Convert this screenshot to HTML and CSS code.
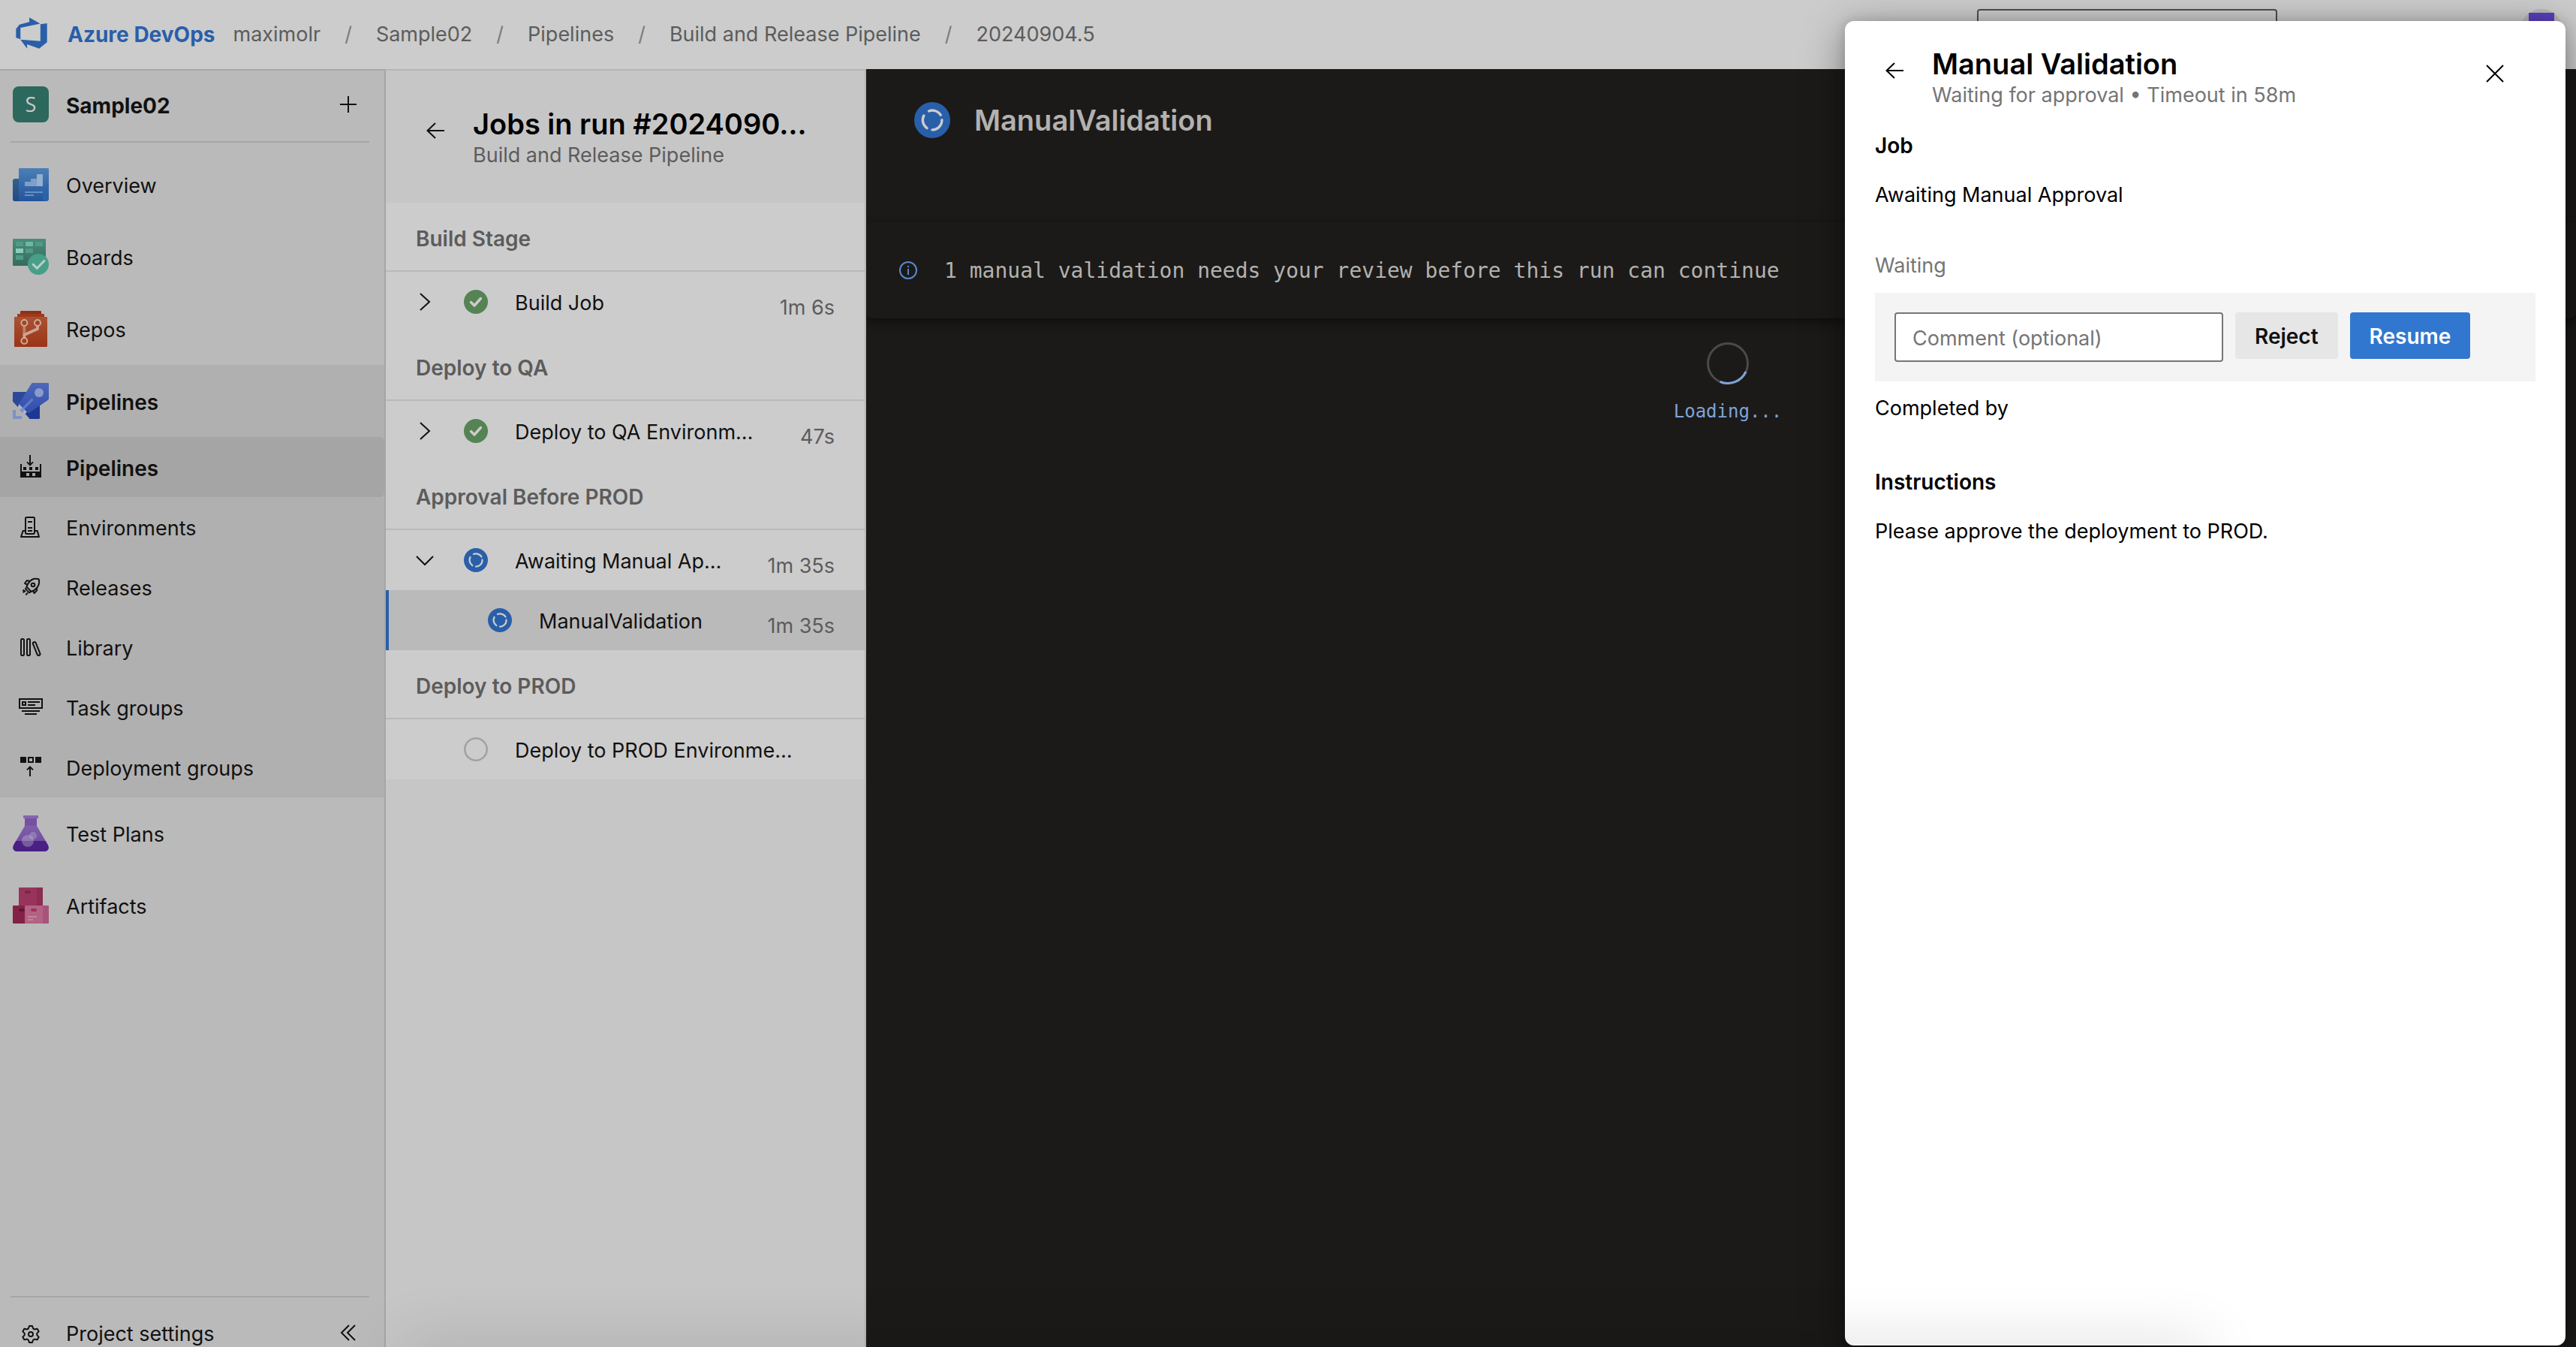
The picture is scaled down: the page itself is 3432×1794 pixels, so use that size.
FILE: index.html
```html
<!DOCTYPE html>
<html lang="en">
<head>
<meta charset="utf-8">
<title>Jobs in run #20240904.5 - Pipelines</title>
<link rel="stylesheet" href="styles.css">
</head>
<body>
<svg class="defs" aria-hidden="true">
  <defs>
    <linearGradient id="g-overview" x2="0" y2="1"><stop stop-color="#4b80b6"/><stop offset="1" stop-color="#24539c"/></linearGradient>
    <linearGradient id="g-overview-back" x2="0" y2="1"><stop stop-color="#335f8f"/><stop offset="1" stop-color="#204a85"/></linearGradient>
    <linearGradient id="g-boards" x2="0" y2="1"><stop stop-color="#4c8c7b"/><stop offset="1" stop-color="#356c5c"/></linearGradient>
    <linearGradient id="g-repos" x2="0" y2="1"><stop stop-color="#a95334"/><stop offset="1" stop-color="#9a3416"/></linearGradient>
    <linearGradient id="g-rocket" x2="0" y2="1"><stop stop-color="#4d68b8"/><stop offset="1" stop-color="#2f4fae"/></linearGradient>
    <linearGradient id="g-flask" x2="0" y2="1"><stop stop-color="#7f60aa"/><stop offset="1" stop-color="#6a42a0"/></linearGradient>
  </defs>
  <symbol id="running" viewBox="0 0 48 48">
    <circle cx="24" cy="24" r="24" fill="#295fa9"/>
    <g fill="none" stroke="#ccc" stroke-width="3.4" stroke-linecap="round">
      <path d="M19.5 12A12.9 12.9 0 0 1 35.2 17.2M36.9 23.6A12.9 12.9 0 0 1 24 36.9M17 34.6A12.9 12.9 0 0 1 12.8 18"/>
    </g>
  </symbol>
  <symbol id="success" viewBox="0 0 32 32">
    <circle cx="16" cy="16" r="16" fill="#558354"/>
    <path d="M9.500 16.500L14 21L22.500 11.500" fill="none" stroke="#ccc" stroke-width="3.400" stroke-linecap="round" stroke-linejoin="round"/>
  </symbol>
  <symbol id="queued" viewBox="0 0 32 32"><circle cx="16" cy="16" r="14.700" fill="none" stroke="#a2a2a2" stroke-width="2.600"/></symbol>
  <symbol id="back" viewBox="0 0 24 24"><path d="M24 12H1.500M12 2L1.500 12L12 22" fill="none" stroke="currentColor" stroke-width="2"/></symbol>
  <symbol id="chevron" viewBox="0 0 24 24"><path d="M6 1L18 12L6 23" fill="none" stroke="currentColor" stroke-width="2"/></symbol>
  <symbol id="chevron-down" viewBox="0 0 24 24"><path d="M1 7L12 18L23 7" fill="none" stroke="currentColor" stroke-width="2"/></symbol>
</svg>

<div class="app">
  <header class="topbar">
    <a class="brand" href="#">
      <svg class="brand-logo" viewBox="62 68 128 128" aria-hidden="true"><path fill="#295fa9" d="M117 69L161 94L81 111V157L63 151V115L77 98L117 87ZM162 96L189 92V169L157 195L108 178V195L81 159L162 165Z"/></svg>
      Azure DevOps
    </a>
    <nav aria-label="Breadcrumb">
      <ol class="crumbs">
        <li><a href="#">maximolr</a></li>
        <li><a href="#">Sample02</a></li>
        <li><a href="#">Pipelines</a></li>
        <li><a href="#">Build and Release Pipeline</a></li>
        <li><a href="#">20240904.5</a></li>
      </ol>
    </nav>
    <div class="topbar-tools">
      <input class="search" type="search" aria-label="Search">
      <button class="account" type="button" aria-label="Account"><span class="account-photo"></span></button>
    </div>
  </header>

  <div class="columns">
    <aside class="sidebar">
      <div class="project">
        <span class="slot project-badge">S</span>
        <a class="project-name" href="#">Sample02</a>
        <button class="icon-button" type="button" aria-label="New"><svg class="ico24" viewBox="0 0 24 24"><path d="M12 1V23M1 12H23" stroke="currentColor" stroke-width="2"/></svg></button>
      </div>
      <nav class="nav" aria-label="Project">
        <a class="nav-item" href="#">
          <svg class="slot" viewBox="0 0 144 144" aria-hidden="true">
            <rect y="48" width="34" height="90" rx="10" fill="url(#g-overview-back)"/>
            <path d="M24 138V10Q24 6 28 6H140Q144 6 144 10V126Q144 138 132 138Z" fill="url(#g-overview)"/>
            <path d="M120 78H144V126Q144 138 132 138Q120 138 120 126Z" fill="#2c66ad" opacity=".7"/>
            <path d="M48 60H72V48H96V78H48Z" fill="#7f9fc8"/><path d="M96 30H120V78H96Z" fill="#93b0d0"/>
            <path d="M48 99H120V105H48ZM48 111H84V117H48Z" fill="#6391c9"/>
          </svg>Overview</a>
        <a class="nav-item" href="#">
          <svg class="slot" viewBox="0 0 144 144" aria-hidden="true">
            <rect width="132" height="108" rx="4" fill="url(#g-boards)"/>
            <path d="M12 12H42V30H12ZM90 12H120V30H90ZM51 39H81V57H51ZM12 66H42V84H12Z" fill="#4f9b86"/>
            <path d="M51 12H81V30H51Z" fill="#6cb8a3"/><path d="M12 39H42V57H12Z" fill="#8acdb9"/>
            <circle cx="102" cy="102" r="42" fill="#499e88"/>
            <path d="M79 100L97 118L128 86" fill="none" stroke="#b4d0c8" stroke-width="9"/>
          </svg>Boards</a>
        <a class="nav-item" href="#">
          <svg class="slot" viewBox="0 0 144 144" aria-hidden="true">
            <rect x="30" width="84" height="16" rx="4" fill="#8f3116"/><rect x="18" y="12" width="108" height="16" rx="4" fill="#a03a1a"/>
            <rect x="6" y="24" width="132" height="120" rx="4" fill="url(#g-repos)"/>
            <path d="M46 60V96" stroke="#bf7f68" stroke-width="12"/>
            <path d="M46 108V96L99 72V60" fill="none" stroke="#cfa494" stroke-width="11"/>
            <g fill="#a34322" stroke="#d0a899" stroke-width="6"><circle cx="46" cy="48" r="12"/><circle cx="99" cy="48" r="12"/><circle cx="46" cy="120" r="12"/></g>
          </svg>Repos</a>
        <div class="nav-group">
          <a class="nav-item strong" href="#">
            <svg class="slot" viewBox="0 0 144 144" aria-hidden="true">
              <path d="M4 36H60L26 84L20 96L0 74V40Q0 36 4 36Z" fill="#2d479b"/>
              <path d="M108 86V140Q108 144 104 144H68L50 124L60 112Z" fill="#1d3892"/>
              <path d="M80 0H140Q144 0 144 4V62Q144 66 140 69L66 119Q61 121 57 117L28 88Q24 83 28 78L74 4Q77 0 80 0Z" fill="url(#g-rocket)"/>
              <circle cx="105" cy="39" r="18" fill="#8b9bca"/>
              <path d="M80 64L36 108" stroke="#5e79c4" stroke-width="10"/>
              <path d="M25 92L52 119" stroke="#b0b6cb" stroke-width="8"/>
              <path d="M32 104L42 114" stroke="#6e8fdc" stroke-width="12"/>
              <path d="M0 108H12V132H36V144H0Z" fill="#7f91c5"/>
            </svg>Pipelines</a>
          <a class="nav-sub current" href="#">
            <span class="slot"><svg class="ico32" viewBox="0 0 96 96" aria-hidden="true">
              <path d="M45 0V40M33 28L45 40L57 28" fill="none" stroke="currentColor" stroke-width="6"/>
              <path fill="currentColor" fill-rule="evenodd" d="M6 36H12V66H84V36H90V90H6ZM30 72V84H42V72ZM54 72V84H66V72ZM18 48H30V60H18ZM42 48H54V60H42ZM66 48H78V60H66Z"/>
            </svg></span>Pipelines</a>
          <a class="nav-sub" href="#">
            <span class="slot"><svg class="ico32" viewBox="0 0 96 96" aria-hidden="true">
              <g fill="none" stroke="currentColor" stroke-width="6" stroke-linejoin="round"><rect x="27" y="9" width="36" height="66" rx="5"/><path d="M36 27H54M36 51H54M36 63H54M26 63H17L9 87H81L74 63H64"/></g>
            </svg></span>Environments</a>
          <a class="nav-sub" href="#">
            <span class="slot"><svg class="ico32" viewBox="0 0 96 96" aria-hidden="true">
              <g fill="none" stroke="currentColor" stroke-width="6" stroke-linejoin="round"><path d="M31 46Q42 20 60 15Q72 13 80 16Q84 30 78 42Q68 60 50 66Z"/><circle cx="57" cy="39" r="7"/><path d="M44 23L32 22L24 33L35 38M73 50L72 62L62 72L57 62M30 50L27 55L42 70L48 66M27 62L17 70M36 70L28 79M22 59L16 63"/></g>
            </svg></span>Releases</a>
          <a class="nav-sub" href="#">
            <span class="slot"><svg class="ico32" viewBox="0 0 96 96" aria-hidden="true">
              <g fill="none" stroke="currentColor" stroke-width="6"><rect x="9" y="15" width="12" height="66" rx="5"/><rect x="33" y="15" width="12" height="66" rx="5"/><rect x="65" y="26" width="12" height="56" rx="5" transform="rotate(-22 71 54)"/></g>
            </svg></span>Library</a>
          <a class="nav-sub" href="#">
            <span class="slot"><svg class="ico32" viewBox="0 0 96 96" aria-hidden="true">
              <g fill="none" stroke="currentColor" stroke-width="6"><rect x="3" y="15" width="90" height="36"/><rect x="15" y="27" width="12" height="12"/><path d="M36 27H84M36 39H66M12 63H84M24 75H72"/></g>
            </svg></span>Task groups</a>
          <a class="nav-sub" href="#">
            <span class="slot"><svg class="ico32" viewBox="0 0 96 96" aria-hidden="true">
              <path fill="currentColor" d="M6 6H30V30H6ZM66 6H90V30H66Z"/>
              <g fill="none" stroke="currentColor" stroke-width="6"><rect x="39" y="9" width="18" height="18"/><path d="M45 84V46M33 58L45 46L57 58"/></g>
            </svg></span>Deployment groups</a>
        </div>
        <a class="nav-item" href="#">
          <svg class="slot" viewBox="0 0 144 144" aria-hidden="true">
            <path d="M48 12H96V44H48Z" fill="#7551a2"/><rect x="42" width="60" height="12" rx="2" fill="#8864ae"/>
            <path d="M48 42H96L140 117Q146 130 140 138Q136 144 126 144H18Q8 144 4 138Q-2 130 4 117Z" fill="url(#g-flask)"/>
            <path d="M13 102H131L140 117Q146 130 140 138Q136 144 126 144H18Q8 144 4 138Q-2 130 4 117Z" fill="#4a2085"/>
            <circle cx="60" cy="102" r="24" fill="#ccc" opacity=".35"/><circle cx="81" cy="81" r="15" fill="#ccc" opacity=".3"/>
          </svg>Test Plans</a>
        <a class="nav-item" href="#">
          <svg class="slot" viewBox="0 0 144 144" aria-hidden="true">
            <rect x="24" width="96" height="76" rx="4" fill="#98345c"/><path d="M96 0H116Q120 0 120 4V72H96Z" fill="#8b2c52"/><rect x="48" y="12" width="24" height="12" rx="6" fill="#7d2448"/>
            <rect y="72" width="60" height="72" rx="4" fill="#832246"/><rect x="24" y="84" width="24" height="12" rx="6" fill="#631537"/>
            <rect x="48" y="72" width="96" height="72" rx="4" fill="#b26384"/><path d="M120 72H140Q144 72 144 76V140Q144 144 140 144H120Z" fill="#a9537a"/>
            <rect x="72" y="84" width="24" height="12" rx="6" fill="#9d315e"/><path d="M60 114H96V120H60ZM60 126H81V132H60Z" fill="#c183a0"/>
          </svg>Artifacts</a>
      </nav>
      <div class="sidebar-foot">
        <a class="settings" href="#">
          <span class="slot"><svg class="ico32" viewBox="0 0 96 96" aria-hidden="true">
            <g fill="none" stroke="currentColor" stroke-width="6" stroke-linejoin="round"><circle cx="48" cy="48" r="9"/><path d="M54 15L57 24Q62 30 66 28L74 26L80 37L74 43Q71 48 74 53L80 59L74 70L66 68Q62 66 57 72L54 81H42L39 72Q34 66 30 68L22 70L16 59L22 53Q25 48 22 43L16 37L22 26L30 28Q34 30 39 24L42 15Z"/></g>
          </svg></span>Project settings</a>
        <button class="icon-button" type="button" aria-label="Collapse"><svg class="ico24" viewBox="0 0 24 24"><path d="M13 2L3 12L13 22M21 2L11 12L21 22" fill="none" stroke="currentColor" stroke-width="2"/></svg></button>
      </div>
    </aside>

    <section class="jobs">
      <div class="jobs-head">
        <button class="icon-button" type="button" aria-label="Back"><svg class="ico24"><use href="#back"/></svg></button>
        <div>
          <h1 class="title">Jobs in run #2024090…</h1>
          <p class="subtitle">Build and Release Pipeline</p>
        </div>
      </div>
      <h2 class="stage">Build Stage</h2>
      <a class="job" href="#"><svg class="ico24"><use href="#chevron"/></svg><svg class="ico32"><use href="#success"/></svg><span class="job-name">Build Job</span><span class="time">1m 6s</span></a>
      <h2 class="stage">Deploy to QA</h2>
      <a class="job" href="#"><svg class="ico24"><use href="#chevron"/></svg><svg class="ico32"><use href="#success"/></svg><span class="job-name">Deploy to QA Environm…</span><span class="time">47s</span></a>
      <h2 class="stage">Approval Before PROD</h2>
      <a class="job" href="#"><svg class="ico24"><use href="#chevron-down"/></svg><svg class="ico32"><use href="#running"/></svg><span class="job-name">Awaiting Manual Ap…</span><span class="time">1m 35s</span></a>
      <a class="job child" href="#"><svg class="ico32"><use href="#running"/></svg><span class="job-name">ManualValidation</span><span class="time">1m 35s</span></a>
      <h2 class="stage">Deploy to PROD</h2>
      <a class="job pending" href="#"><svg class="ico32"><use href="#queued"/></svg><span class="job-name">Deploy to PROD Environme…</span></a>
    </section>

    <main class="log">
      <div class="log-head">
        <svg class="ico48"><use href="#running"/></svg>
        <h2 class="log-title">ManualValidation</h2>
      </div>
      <div class="notice">
        <svg class="ico24" viewBox="0 0 24 24" aria-hidden="true"><circle cx="12" cy="12" r="11" fill="none" stroke="#5b88cd" stroke-width="2"/><path d="M12 10V18M12 6V8" stroke="#5b88cd" stroke-width="2"/></svg>
        <span class="notice-text">1 manual validation needs your review before this run can continue</span>
      </div>
      <div class="loading">
        <svg class="ico56" viewBox="0 0 56 56" aria-hidden="true"><circle cx="28" cy="28" r="26.500" fill="none" stroke="#4b4a48" stroke-width="3"/><path d="M52 39A26.500 26.500 0 0 1 17.500 52.300" fill="none" stroke="#7fa3d8" stroke-width="3"/></svg>
        <span>Loading...</span>
      </div>
    </main>
  </div>

  <div class="panel" role="dialog" aria-labelledby="panel-title">
    <div class="panel-head">
      <button class="icon-button" type="button" aria-label="Back"><svg class="ico24"><use href="#back"/></svg></button>
      <div class="panel-heading">
        <h2 class="title" id="panel-title">Manual Validation</h2>
        <p class="subtitle">Waiting for approval • Timeout in 58m</p>
      </div>
      <button class="icon-button close" type="button" aria-label="Close"><svg class="ico24" viewBox="0 0 24 24"><path d="M1 1L23 23M23 1L1 23" stroke="currentColor" stroke-width="2"/></svg></button>
    </div>
    <h3 class="field">Job</h3>
    <p class="value">Awaiting Manual Approval</p>
    <p class="waiting">Waiting</p>
    <form class="review">
      <input class="comment" type="text" placeholder="Comment (optional)" aria-label="Comment (optional)">
      <button class="btn" type="button">Reject</button>
      <button class="btn primary" type="button">Resume</button>
    </form>
    <p class="completed">Completed by</p>
    <h3 class="field">Instructions</h3>
    <p class="value">Please approve the deployment to PROD.</p>
  </div>
  <div class="edge-shade"></div>
</div>
</body>
</html>
```

FILE: styles.css
```css
* { box-sizing: border-box; }

body {
  margin: 0;
  background: #1b1a18;
  color: #111;
  font-family: Inter, "Liberation Sans", sans-serif;
  font-size: 27px;
  line-height: 40px;
}

h1, h2, h3, p, ol { margin: 0; padding: 0; font-size: inherit; }
a { color: inherit; text-decoration: none; }
button, input { font: inherit; color: inherit; }

.defs { position: absolute; width: 0; height: 0; }
.ico24 { width: 24px; height: 24px; flex: none; display: block; }
.ico32 { width: 32px; height: 32px; flex: none; display: block; }
.ico48 { width: 48px; height: 48px; flex: none; }
.ico56 { width: 56px; height: 56px; }
.icon-button { padding: 0; border: 0; background: none; }

.app {
  position: relative;
  display: flex;
  flex-direction: column;
  min-height: 100vh;
  overflow: hidden;
}

/* Top bar */
.topbar {
  display: flex;
  align-items: center;
  height: 92px;
  padding: 0 18px 0 21px;
  background: #ccc;
}
.brand {
  display: flex;
  align-items: center;
  gap: 27px;
  color: #295fa9;
  font-size: 28px;
  font-weight: 700;
}
.brand-logo { width: 42px; height: 42px; margin-bottom: 4px; }
.crumbs { display: flex; list-style: none; margin-left: 24px; color: #5c5c5c; }
.crumbs li + li::before { content: "/"; padding: 0 32px; color: #7c7c7c; }
.topbar-tools { display: flex; gap: 324px; align-items: center; margin-left: auto; }
.search {
  width: 400px;
  height: 68px;
  border: 2px solid #4e4e4e;
  border-radius: 4px;
  background: none;
}
.account {
  display: flex;
  align-items: center;
  justify-content: center;
  width: 56px;
  height: 68px;
  padding: 0;
  border: 0;
  border-radius: 28px;
  background: #b9b9b9;
}
.account-photo { width: 34px; height: 58px; background: #5b3fc0; }

.columns { display: flex; flex: 1; }

/* Project navigation */
.sidebar {
  display: flex;
  flex-direction: column;
  flex: none;
  width: 514px;
  border-top: 2px solid #a8a8a8;
  border-right: 2px solid #a6a6a6;
  background: #bababa;
}
.slot { display: flex; align-items: center; justify-content: center; flex: none; width: 48px; height: 48px; }
.project {
  display: flex;
  align-items: center;
  gap: 23px;
  height: 96px;
  margin: 0 20px 8px 14px;
  padding: 0 16px 4px 3px;
  border-bottom: 2px solid #a6a6a6;
}
.project-badge {
  border-radius: 8px;
  background: #2d685c;
  color: #ccc;
  font-family: "Open Sans", sans-serif;
}
.project-name { flex: 1; padding-top: 4px; font-size: 28px; font-weight: 700; }
.nav-item, .nav-sub { display: flex; align-items: center; gap: 23px; padding: 4px 0 0 17px; }
.nav-item .slot, .nav-sub .slot { margin-bottom: 4px; }
.nav-item { height: 96px; }
.nav-sub { height: 80px; }
.nav-group { background: #b0b0b0; }
.strong, .current { font-size: 28px; font-weight: 600; }
.current { border-radius: 0 6px 6px 0; background: #a5a5a5; }
.sidebar-foot {
  display: flex;
  align-items: center;
  margin: auto 20px 0 14px;
  padding: 28px 16px 0 3px;
  height: 68px;
  border-top: 2px solid #a6a6a6;
}
.settings { display: flex; align-items: center; flex: 1; gap: 23px; height: 40px; padding-top: 4px; }

/* Job list */
.jobs {
  flex: none;
  width: 640px;
  border-top: 2px solid #b5b5b5;
  border-right: 2px solid #b5b5b5;
  background: #c6c6c6;
}
.title { color: #000; font-size: 38px; line-height: 44px; font-weight: 600; white-space: nowrap; }
.subtitle { color: #5c5c5c; }
.jobs-head { display: flex; gap: 38px; align-items: flex-start; height: 176px; padding: 49px 24px 0 54px; }
.jobs-head .icon-button, .panel-head .icon-button { margin-top: 19px; }
.stage {
  height: 92px;
  padding: 28px 40px 0;
  border-bottom: 2px solid #b9b9b9;
  background: #ccc;
  color: #5c5c5c;
  font-size: 28px;
  font-weight: 600;
}
.job { display: flex; align-items: center; height: 80px; padding: 0 40px; background: #ccc; }
.job .ico32 { margin: 0 36px 0 40px; }
.job-name { flex: 1; padding-top: 4px; white-space: nowrap; }
.time { padding-top: 16px; color: #5c5c5c; }
.child { padding-left: 96px; background: #bababa; box-shadow: inset 4px 0 #295fa9; }
.pending { padding-left: 64px; }

/* Log */
.log { flex: 1; min-width: 0; overflow: hidden; background: #1b1a18; color: #b3b1af; }
.log-head { display: flex; align-items: center; gap: 32px; height: 203px; padding: 0 64px 67px; }
.log-title { font-size: 38px; line-height: 44px; font-weight: 600; }
.notice {
  display: flex;
  align-items: center;
  gap: 36px;
  height: 129px;
  padding-left: 44px;
  border-radius: 8px;
  box-shadow: 0 6px 14px rgba(0, 0, 0, .4), 0 0 2px rgba(0, 0, 0, .3);
  font-family: "DejaVu Sans Mono", monospace;
  font-size: 28px;
}
.notice-text { padding-top: 2px; }
.loading {
  display: flex;
  flex-direction: column;
  align-items: center;
  gap: 16px;
  padding: 32px 0 0 18px;
  color: #7fa3d8;
  font-family: "DejaVu Sans Mono", monospace;
  font-size: 24px;
}

/* Validation panel */
.panel {
  position: absolute;
  top: 28px;
  right: 14px;
  bottom: 2px;
  width: 960px;
  padding: 35px 40px;
  border-radius: 12px;
  background: #fff;
  box-shadow: 0 12px 56px rgba(0, 0, 0, .4), 0 0 16px rgba(0, 0, 0, .15);
  color: #000;
}
.panel-head { display: flex; align-items: flex-start; gap: 38px; padding: 0 42px 27px 14px; }
.panel-head .close { margin-top: 23px; }
.panel-heading { flex: 1; }
.panel .subtitle, .waiting { color: #757575; }
.field { font-size: 28px; font-weight: 600; }
.value { padding-top: 26px; }
.waiting { padding: 54px 0 16px; }
.review {
  display: flex;
  align-items: flex-start;
  gap: 16px;
  height: 118px;
  padding: 26px;
  background: #f4f4f4;
}
.comment {
  width: 438px;
  height: 66px;
  padding: 2px 22px 0;
  border: 2px solid #767676;
  border-radius: 4px;
  background: #fff;
}
.comment::placeholder { color: #757575; opacity: 1; }
.btn {
  height: 62px;
  padding: 2px 26px 0;
  border: 0;
  border-radius: 4px;
  background: #e6e6e6;
  color: #111;
  font-size: 28px;
  font-weight: 600;
}
.primary { background: #3277cf; color: #fff; }
.completed { padding: 16px 0 58px; }

/* Soft shade rising from the lower window edge */
.edge-shade {
  position: absolute;
  right: 500px;
  bottom: -40px;
  left: 540px;
  height: 40px;
  box-shadow: 0 0 80px 8px rgba(0, 0, 0, .13);
  pointer-events: none;
}
```
